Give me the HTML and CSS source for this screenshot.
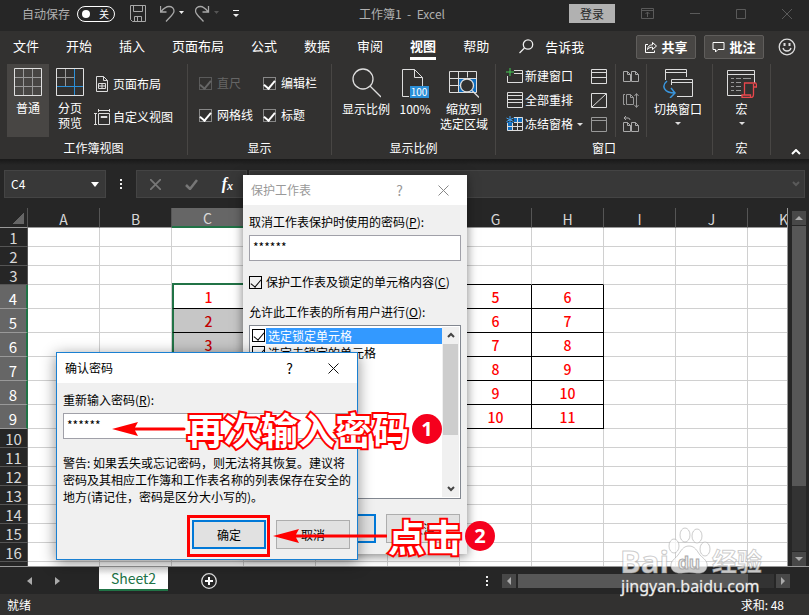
FILE: index.html
```html
<!DOCTYPE html>
<html lang="zh-CN">
<head>
  <meta charset="UTF-8" />
  <meta name="viewport" content="width=device-width, initial-scale=1.0"/>
  <title>工作簿1 - Excel</title>
  <link rel="stylesheet" href="styles.css">
</head>
<body>
  <div class="app">
    <header class="titlebar">
      <div class="quick">
        <label class="autosave" for="autosave">自动保存</label>
        <button class="switch" id="autosave"><span class="knob"></span>关</button>
        <button class="icon-btn save" aria-label="保存">
          <svg width="16" height="17" viewBox="0 0 16 17" fill="none" stroke="#a8a8a8"><path d="M.5.5h15v16H2.500l-2-2zM3.500.5v6h9v-6M4.500 16.500v-5h7v5M7.500 12v4"/></svg>
        </button>
        <button class="icon-btn undo" aria-label="撤消">
          <svg width="24" height="18" viewBox="0 0 24 18" fill="none" stroke="#a8a8a8"><path d="M.5 1v6h6M.8 6.800C4 3 6 1.500 9 1.500c3 0 5 2 5 4.500 0 3-3 5-8 10.500" stroke-width="1.300"/><path d="M19 6h5l-2.500 3z" fill="#eee" stroke="none"/></svg>
        </button>
        <button class="icon-btn redo" aria-label="恢复">
          <svg width="24" height="18" viewBox="0 0 24 18" fill="none" stroke="#a8a8a8"><path d="M13.500 1v6h-6M13.200 6.800C10 3 8 1.500 5.500 1.500c-3 0-5 2-5 4.500 0 3 3 5 8 10.500" stroke-width="1.300"/><path d="M19 6h5l-2.500 3z" fill="#555" stroke="none"/></svg>
        </button>
        <button class="icon-btn more" aria-label="自定义快速访问工具栏">
          <svg width="6" height="8" viewBox="0 0 6 8" fill="#eee"><path d="M0 0h6v1H0zM0 4h6L3 7z"/></svg>
        </button>
      </div>
      <div class="doc-title">工作簿1&nbsp; -&nbsp; Excel</div>
      <div class="window-tools">
        <button class="login">登录</button>
        <div class="window-buttons">
          <button class="icon-btn" aria-label="功能区显示选项"><svg width="13" height="11" viewBox="0 0 13 11" fill="none" stroke="#5a5a5a"><path d="M.5.5h12v10H.5zM.5 2.500h12M6.500 9V4M4.500 6l2-2 2 2"/></svg></button>
          <button class="icon-btn" aria-label="最小化"><svg width="10" height="11" viewBox="0 0 10 11" stroke="#5a5a5a"><path d="M0 5.500h10"/></svg></button>
          <button class="icon-btn" aria-label="最大化"><svg width="10" height="10" viewBox="0 0 10 10" fill="none" stroke="#5a5a5a"><path d="M.5.5h9v9h-9z"/></svg></button>
          <button class="icon-btn" aria-label="关闭"><svg width="10" height="10" viewBox="0 0 10 10" stroke="#5a5a5a"><path d="M0 0l10 10M10 0L0 10"/></svg></button>
        </div>
      </div>
    </header>

    <nav class="tabs">
      <a href="#">文件</a>
      <a href="#">开始</a>
      <a href="#">插入</a>
      <a href="#">页面布局</a>
      <a href="#">公式</a>
      <a href="#">数据</a>
      <a href="#">审阅</a>
      <a href="#" class="active">视图</a>
      <a href="#">帮助</a>
      <a href="#" class="tell-me"><svg width="15" height="15" viewBox="0 0 15 15" fill="none" stroke="#eee" stroke-width="1.300"><circle cx="9" cy="5.500" r="4.700"/><path d="M5.500 9L.5 14"/></svg>告诉我</a>
      <div class="tab-actions">
        <button class="action"><svg width="13" height="13" viewBox="0 0 13 13" fill="none" stroke="#fff"><path d="M4 4.500H1.500v8h9v-2M3.500 9.500C4 6 6 4.800 8.500 4.800V2.500l4 3.500-4 3.500V7.200C6.500 7.200 5 7.600 3.500 9.500z"/></svg>共享</button>
        <button class="action"><svg width="13" height="12" viewBox="0 0 13 12" fill="none" stroke="#fff"><path d="M1 1.500h11v7H6l-2.500 2.500V8.500H1z"/></svg>批注</button>
        <button class="icon-btn" aria-label="反馈"><svg width="18" height="18" viewBox="0 0 18 18" fill="none" stroke="#ddd" stroke-width="1.300"><circle cx="9" cy="9" r="7.800"/><path d="M5 10c1 4 7 4 8 0"/><path d="M6.500 5v3M11.500 5v3" stroke-width="2"/></svg></button>
      </div>
    </nav>

    <section class="ribbon">
      <div class="group group-views">
        <div class="tools">
          <button class="big selected">
            <svg width="28" height="28" viewBox="0 0 28 28" fill="none" stroke="#999"><path d="M9.500 1v26M18.500 1v26M1 9.500h26M1 18.500h26"/><path d="M.5.5h27v27H.5z" stroke="#e0e0e0"/></svg>
            普通
          </button>
          <button class="big">
            <svg width="28" height="28" viewBox="0 0 28 28" fill="none" stroke="#999"><path d="M9.500 1v17M1 9.500h17"/><path d="M.5.5h27v27H.5z" stroke="#e0e0e0"/><path d="M18.500 1v26M1 18.500h26" stroke="#2b8fd8"/></svg>
            分页<br>预览
          </button>
          <div class="stack stack-wide">
            <button class="small"><svg width="16" height="16" viewBox="0 0 16 16" fill="none" stroke="#ddd"><path d="M2.500.5h7l4 4v11h-11zM9.500.5v4h4M4.500 7.500h7v5h-7zM8 7.500v5M4.500 10h7"/></svg>页面布局</button>
            <button class="small"><svg width="16" height="16" viewBox="0 0 16 16" fill="none" stroke="#ddd"><path d="M4.500 4.500h11v11h-11zM4.500 0v3M15.500 0v3M4.500 1.500h11M0 4.500h3M0 15.500h3M1.500 4.500v11M7 7.500h6v1H7z"/></svg>自定义视图</button>
          </div>
        </div>
        <div class="group-name">工作簿视图</div>
      </div>

      <div class="group group-show">
        <div class="tools checks">
          <label class="disabled"><input type="checkbox" checked disabled>直尺</label>
          <label><input type="checkbox" checked>编辑栏</label>
          <label><input type="checkbox" checked>网格线</label>
          <label><input type="checkbox" checked>标题</label>
        </div>
        <div class="group-name">显示</div>
      </div>

      <div class="group group-zoom">
        <div class="tools">
          <button class="big">
            <svg width="30" height="30" viewBox="0 0 30 30" fill="none" stroke="#ddd" stroke-width="1.300"><circle cx="12" cy="11" r="10"/><path d="M19 18l11 11"/></svg>
            显示比例
          </button>
          <button class="big">
            <svg width="28" height="30" viewBox="0 0 28 30" fill="none" stroke="#ddd"><path d="M8 28.500H1.500V1.500h12l8 8V18M13.500 1.500v8h8"/><path d="M9 18h19v12H9z" fill="#2b8fd8" stroke="none"/><text x="18" y="28" text-anchor="middle" font-size="10" fill="#fff" stroke="none">100</text></svg>
            100%
          </button>
          <button class="big">
            <svg width="30" height="30" viewBox="0 0 30 30" fill="none" stroke="#ddd"><path d="M10 11h18v13H10z" fill="#0f6cbd" stroke="none"/><path d="M.5 3.500h27v21H.5zM9.500 3.500v21M18.500 3.500v6M.5 10.500h27M.5 17.500h10"/><circle cx="18" cy="17.500" r="6.500" fill="#323130" stroke-width="1.300"/><path d="M23 22.500l7 7" stroke-width="1.300"/></svg>
            缩放到<br>选定区域
          </button>
        </div>
        <div class="group-name">显示比例</div>
      </div>

      <div class="group group-window">
        <div class="tools">
          <div class="stack">
            <button class="small"><svg width="17" height="16" viewBox="0 0 17 16" fill="none" stroke="#ddd"><path d="M8 2.500h8.500v12H1.500V8M8 5.500h8.500"/><path d="M4 0v8M0 4h8" stroke="#4c5"/></svg>新建窗口</button>
            <button class="small"><svg width="17" height="16" viewBox="0 0 17 16" fill="none" stroke="#ddd"><path d="M1.500.5h15v15h-15zM1.500 3.500h15M1.500 7.500h15M1.500 10.500h15"/></svg>全部重排</button>
            <button class="small"><svg width="17" height="16" viewBox="0 0 17 16" fill="none" stroke="#ddd"><path d="M8 1h9v5H8zM1 6h6v9H1z" fill="#0f6cbd" stroke="none"/><path d="M8 1.500h8.500v13h-15V7M6.500 7v8M11.500 1v14M1.500 10.500h15M8 6.500h8"/><path d="M4 0v7M.5 2l7 3.500M7.500 2l-7 3.500" stroke="#42a5f5"/></svg>冻结窗格<span class="arrow"></span></button>
          </div>
          <div class="stack icons">
            <button class="icon-btn" aria-label="拆分"><svg width="16" height="15" viewBox="0 0 16 15" fill="none" stroke="#ddd"><path d="M.5.5h15v14H.5zM.5 3.500h15M.5 8.500h15"/></svg></button>
            <button class="icon-btn" aria-label="隐藏"><svg width="16" height="15" viewBox="0 0 16 15" fill="none" stroke="#ddd"><path d="M.5.5h15v14H.5zM1 14L15 1"/></svg></button>
            <button class="icon-btn" aria-label="取消隐藏"><svg width="16" height="15" viewBox="0 0 16 15" fill="none" stroke="#999"><path d="M.5.5h15v14H.5zM.5 3.500h15"/></svg></button>
          </div>
          <div class="stack icons split">
            <button class="icon-btn" aria-label="并排查看"><svg width="16" height="15" viewBox="0 0 16 15" fill="none" stroke="#aaa"><path d="M.5 2.500h4l3 3v7h-7zM4.500 2.500v3h3M8.500 2.500h4l3 3v7h-7zM12.500 2.500v3h3"/></svg></button>
            <button class="icon-btn" aria-label="同步滚动"><svg width="16" height="15" viewBox="0 0 16 15" fill="none" stroke="#999"><path d="M2 1.500H.5v10H2M3.500 1.500h4l3 3v7h-7zM7.500 1.500v3h3M13.500 1v13M11.500 3l2-2.500 2 2.500M11.500 12l2 2.500 2-2.500"/></svg></button>
            <button class="icon-btn" aria-label="重设窗口位置"><svg width="16" height="16" viewBox="0 0 16 16" fill="none" stroke="#aaa"><path d="M.5 6.500h4l3 3v6h-7zM4.500 6.500v3h3M8.500 6.500h4l3 3v6h-7zM12.500 6.500v3h3M3 0L1 2l2 2M1 2h4q2 0 2 2"/></svg></button>
          </div>
          <button class="big switch-window">
            <svg width="30" height="30" viewBox="0 0 30 30" fill="none" stroke="#ddd"><path d="M2.500 12V1.500h21V9M2.500 4.500h21"/><path d="M8.500 17v-5.500h21v17H14M8.500 14.500h21"/><path d="M4 13c-6 5-3 12 8 12M8 20l4 5-5 5" stroke="#3a96dd" stroke-width="1.500"/></svg>
            切换窗口
            <span class="arrow"></span>
          </button>
        </div>
        <div class="group-name">窗口</div>
      </div>

      <div class="group group-macro">
        <div class="tools">
          <button class="big">
            <svg width="30" height="30" viewBox="0 0 30 30" fill="none" stroke="#ddd"><path d="M15 27.500H.5v-25h27V15M.5 6.500h27"/><path d="M4 10.500h3m2 0h5m2 0h8M4 14.500h3m2 0h5M4 18.500h3m2 0h5M4 22.500h3m2 0h5" stroke="#999"/><path d="M17.500 27v-12h11q1 0 1 4h-3M26.500 16v10q0 3.500-2.500 3.500h-9V27h8.500v2.500" stroke="#e8474c" stroke-width="1.300"/></svg>
            宏
            <span class="arrow"></span>
          </button>
        </div>
        <div class="group-name">宏</div>
      </div>
      <button class="icon-btn collapse" aria-label="折叠功能区"><svg width="10" height="6" viewBox="0 0 10 6" fill="none" stroke="#fff" stroke-width="2"><path d="M1 5l4-4 4 4"/></svg></button>
    </section>

    <div class="formula-bar">
      <div class="name-box">
        <input type="text" value="C4" aria-label="名称框">
        <button class="icon-btn" aria-label="名称列表"><svg width="8" height="5" viewBox="0 0 8 5" fill="#fff"><path d="M0 0h8L4 5z"/></svg></button>
      </div>
      <span class="dots"></span>
      <div class="fx-box">
        <button class="icon-btn" aria-label="取消"><svg width="11" height="11" viewBox="0 0 11 11" stroke="#777" stroke-width="1.800"><path d="M0 0l11 11M11 0L0 11"/></svg></button>
        <button class="icon-btn" aria-label="输入"><svg width="13" height="11" viewBox="0 0 13 11" fill="none" stroke="#777" stroke-width="2.500"><path d="M1 6l4 4 7-9"/></svg></button>
        <button class="icon-btn fx" aria-label="插入函数"><i>f</i><i class="sub">x</i></button>
      </div>
      <div class="formula-input">
        <input type="text" aria-label="编辑栏">
        <svg width="8" height="6" viewBox="0 0 8 6" fill="none" stroke="#5a5a5a" stroke-width="2"><path d="M1 1l3 3 3-3"/></svg>
      </div>
    </div>

    <main class="workspace">
      <div class="sheet">
        <table class="grid" id="grid"></table>
      </div>
      <div class="scroll-v">
        <span class="scroll-btn"><svg width="8" height="4" viewBox="0 0 8 4" fill="#aaa"><path d="M0 4l4-4 4 4z"/></svg></span>
        <span class="scroll-track"><span class="scroll-thumb"></span></span>
        <span class="scroll-btn"><svg width="8" height="4" viewBox="0 0 8 4" fill="#aaa"><path d="M0 0h8L4 4z"/></svg></span>
      </div>
    </main>

    <div class="sheet-tabs">
      <div class="sheet-nav">
        <button class="icon-btn" aria-label="上一个"><svg width="5" height="8" viewBox="0 0 5 8" fill="#aaa"><path d="M5 0v8L0 4z"/></svg></button>
        <button class="icon-btn" aria-label="下一个"><svg width="5" height="8" viewBox="0 0 5 8" fill="#aaa"><path d="M0 0v8l5-4z"/></svg></button>
      </div>
      <a href="#" class="sheet-tab">Sheet2</a>
      <button class="icon-btn add-sheet" aria-label="新工作表"><svg width="16" height="16" viewBox="0 0 16 16" fill="none" stroke="#ddd"><circle cx="8" cy="8" r="7.300" stroke-width="1.300"/><path d="M8 4v8M4 8h8" stroke="#fff" stroke-width="2"/></svg></button>
      <span class="dots"></span>
      <div class="scroll-h">
        <span class="scroll-btn"><svg width="4" height="8" viewBox="0 0 4 8" fill="#aaa"><path d="M4 0v8L0 4z"/></svg></span>
        <span class="scroll-track"><span class="scroll-thumb"></span></span>
        <span class="scroll-btn"><svg width="4" height="8" viewBox="0 0 4 8" fill="#aaa"><path d="M0 0v8l4-4z"/></svg></span>
      </div>
    </div>

    <footer class="status">
      <span>就绪</span>
      <span>求和: 48</span>
    </footer>
  </div>

  <div class="dialog protect">
    <div class="dialog-title">
      <span>保护工作表</span>
      <button class="icon-btn help" aria-label="帮助">?</button>
      <button class="icon-btn" aria-label="关闭"><svg width="11" height="11" viewBox="0 0 11 11" stroke="#888"><path d="M.5.5l10 10M10.500.5l-10 10"/></svg></button>
    </div>
    <div class="dialog-body">
      <label for="unprotect">取消工作表保护时使用的密码(<u>P</u>):</label>
      <input type="text" class="field" id="unprotect" value="******">
      <label class="check-row"><input type="checkbox" checked><span>保护工作表及锁定的单元格内容(<u>C</u>)</span></label>
      <div class="list-label">允许此工作表的所有用户进行(<u>O</u>):</div>
      <div class="list">
        <div class="list-items">
          <label class="current"><input type="checkbox" checked><span>选定锁定单元格</span></label>
          <label><input type="checkbox" checked><span>选定未锁定的单元格</span></label>
        </div>
        <div class="list-scroll">
          <svg width="8" height="7" viewBox="0 0 8 7" fill="none" stroke="#444" stroke-width="2"><path d="M1 5l3-3 3 3"/></svg>
          <span class="list-thumb"></span>
          <svg width="8" height="7" viewBox="0 0 8 7" fill="none" stroke="#444" stroke-width="2"><path d="M1 2l3 3 3-3"/></svg>
        </div>
      </div>
      <div class="buttons">
        <button class="btn primary" aria-label="确定"></button>
        <button class="btn">取消</button>
      </div>
    </div>
  </div>

  <div class="dialog confirm">
    <div class="dialog-title">
      <span>确认密码</span>
      <button class="icon-btn help" aria-label="帮助">?</button>
      <button class="icon-btn" aria-label="关闭"><svg width="11" height="11" viewBox="0 0 11 11" stroke="#111"><path d="M.5.5l10 10M10.500.5l-10 10"/></svg></button>
    </div>
    <div class="dialog-body">
      <label for="again">重新输入密码(<u>R</u>):</label>
      <input type="text" class="field" id="again" value="******">
      <p>警告: 如果丢失或忘记密码，则无法将其恢复。建议将<br>密码及其相应工作簿和工作表名称的列表保存在安全的<br>地方(请记住，密码是区分大小写的)。</p>
      <div class="buttons">
        <button class="btn primary">确定</button>
        <button class="btn">取消</button>
      </div>
    </div>
  </div>

  <!-- step marks -->
  <div class="mark-box"></div>
  <div class="step step-1">
    <svg width="74" height="16" viewBox="0 0 74 16" fill="#f00"><path d="M0 8L26 1l-3 5.500h49a1.500 1.500 0 0 1 0 3H23L26 15z"/></svg>
    <span class="step-text">再次输入密码</span>
    <span class="step-num">1</span>
  </div>
  <div class="step step-2">
    <svg width="114" height="16" viewBox="0 0 114 16" fill="#f00"><path d="M0 8L26 1l-3 5.500h90a1.500 1.500 0 0 1 0 3H23L26 15z"/></svg>
    <span class="step-text">点击</span>
    <span class="step-num">2</span>
  </div>

  <svg class="watermark" width="146" height="72" viewBox="0 0 146 72">
    <g stroke="#999" stroke-opacity=".5" fill="#fff" fill-opacity=".75">
      <text x="0" y="46" class="wm-latin">Bai</text>
      <ellipse cx="54" cy="19" rx="5" ry="7"/>
      <ellipse cx="65" cy="8" rx="5" ry="7"/>
      <ellipse cx="77" cy="9" rx="5" ry="7"/>
      <ellipse cx="85" cy="22" rx="5" ry="7"/>
      <path d="M69 19c6 0 8 5 11 9 4 4 8 6 7 12-1 6-7 7-12 6q-6-1-12 0c-6 1-11-1-12-6-1-6 4-8 7-12s5-9 11-9z"/>
      <text x="92" y="44" class="wm-cjk">经验</text>
    </g>
    <text x="58" y="42" class="wm-du">du</text>
    <text x="1" y="65" class="wm-url">jingyan.baidu.com</text>
  </svg>

  <script>
    const columns = ["A", "B", "C", "D", "E", "F", "G", "H", "I", "J", "K"];
    const values = {
      C4: 1, C5: 2, C6: 3,
      G4: 5, G5: 6, G6: 7, G7: 8, G8: 9, G9: 10,
      H4: 6, H5: 7, H6: 8, H7: 9, H8: 10, H9: 11
    };

    let html = "<thead><tr><th class='corner'></th>";
    columns.forEach((c) => {
      html += `<th class="${c === "C" ? "picked" : ""}">${c}</th>`;
    });
    html += "</tr></thead><tbody>";

    for (let r = 1; r <= 17; r++) {
      const inRange = r >= 4 && r <= 9;
      html += `<tr class="${inRange ? "tall" : ""}"><th>${r < 17 ? r : ""}</th>`;
      columns.forEach((c) => {
        const list = [];
        if (inRange && c >= "C" && c <= "H") list.push("boxed");
        if (r === 3 && c >= "D" && c <= "H") list.push("above");
        if (r === 3 && c === "C") list.push("above-picked");
        if (inRange && c === "C") list.push(r === 4 ? "range first" : "range");
        html += `<td class="${list.join(" ")}">${values[c + r] || ""}</td>`;
      });
      html += "</tr>";
    }
    document.getElementById("grid").innerHTML = html + "</tbody>";
  </script>
</body>
</html>
```
FILE: styles.css
```css
* {
  box-sizing: border-box;
}
body {
  margin: 0;
  font-family: "Noto Sans CJK SC", "Noto Sans", sans-serif;
  font-size: 12px;
  line-height: 16px;
  background: #262626;
  color: #fff;
  overflow: hidden;
}
button, input {
  font: inherit;
  color: inherit;
  margin: 0;
}
button {
  padding: 0;
  border: none;
  background: none;
  white-space: nowrap;
}
svg {
  display: block;
  flex: none;
}
a {
  color: inherit;
  text-decoration: none;
}
.icon-btn {
  display: flex;
  align-items: center;
  justify-content: center;
}
.app {
  height: 100vh;
  display: flex;
  flex-direction: column;
}

/* title bar */
.titlebar {
  display: grid;
  grid-template-columns: 1fr auto 1fr;
  align-items: center;
  height: 31px;
  padding: 0 17px 4px 22px;
  color: #b0b0b0;
}
.doc-title {
  padding-right: 10px;
}
.quick {
  display: flex;
  align-items: center;
}
.switch {
  display: flex;
  align-items: center;
  justify-content: space-between;
  width: 38px;
  height: 16px;
  margin-left: 7px;
  padding: 0 5px 0 4px;
  border: 1px solid #fff;
  border-radius: 8px;
  color: #fff;
  font-size: 10px;
  line-height: 14px;
}
.knob {
  width: 8px;
  height: 8px;
  border-radius: 50%;
  background: #fff;
}
.save {
  margin-left: 15px;
}
.undo {
  margin-left: 14px;
}
.redo {
  margin-left: 11px;
}
.more {
  margin-left: 14px;
}
.window-tools {
  display: flex;
  justify-content: flex-end;
  align-items: center;
  gap: 26px;
}
.login {
  width: 46px;
  height: 19px;
  background: #b1b1b1;
  color: #262626;
}
.window-buttons {
  display: flex;
  gap: 36px;
}

/* ribbon tabs */
.tabs {
  display: flex;
  align-items: center;
  gap: 27px;
  height: 31px;
  padding: 0 13px;
  background: #323130;
  font-size: 13px;
}
.tabs a {
  height: 26px;
  line-height: 24px;
  white-space: nowrap;
}
.tabs .active {
  font-weight: bold;
  border-bottom: 3px solid #fff;
}
.tabs .tell-me {
  display: flex;
  align-items: center;
  gap: 11px;
  margin-left: 3px;
}
.tab-actions {
  display: flex;
  align-items: center;
  gap: 8px;
  margin-left: auto;
}
.tab-actions .icon-btn {
  margin-left: 6px;
}
.action {
  display: flex;
  align-items: center;
  justify-content: center;
  gap: 4px;
  width: 60px;
  height: 24px;
  border: 1px solid #605e5c;
  border-radius: 2px;
  background: #484644;
  font-weight: bold;
}

/* ribbon */
.ribbon {
  display: flex;
  height: 98px;
  padding: 2px 8px 4px 0;
  background: #323130;
  border-bottom: 1px solid #1a1a1a;
}
.group {
  display: flex;
  flex-direction: column;
  justify-content: space-between;
  border-right: 1px solid #484644;
}
.group-name {
  text-align: center;
  line-height: 14px;
}
.tools {
  display: flex;
}
.group-views {
  width: 188px;
}
.group-views .tools {
  padding-left: 7px;
}
.group-show {
  width: 144px;
}
.group-zoom {
  width: 164px;
}
.group-zoom .tools {
  padding-left: 6px;
}
.group-window {
  width: 217px;
}
.group-window .tools {
  padding-left: 10px;
}
.group-macro {
  width: 58px;
}
.group-macro .tools {
  justify-content: center;
}
.big {
  display: flex;
  flex-direction: column;
  align-items: center;
  height: 73px;
  min-width: 42px;
  padding: 4px 4px 0;
  line-height: 15px;
}
.big svg {
  margin-bottom: 4px;
}
.big .arrow {
  margin: 6px 0 0;
}
.group-zoom .big svg,
.group-window .big svg,
.group-macro .big svg {
  margin-bottom: 3px;
}
.switch-window {
  margin-left: 3px;
}
.selected {
  background: #484644;
}
.arrow {
  display: inline-block;
  margin-left: 2px;
  border: 3px solid transparent;
  border-top-color: #ddd;
  border-bottom: none;
}
.small {
  display: flex;
  align-items: center;
  gap: 2px;
  height: 24px;
}
.stack {
  display: flex;
  flex-direction: column;
}
.stack-wide {
  justify-content: space-around;
  padding: 4px 0 4px 3px;
}
.stack-wide .small {
  gap: 3px;
}
.icons {
  padding: 0 7px;
}
.icons .icon-btn {
  height: 24px;
}
.stack + .icons {
  margin-left: 1px;
}
.split {
  border-left: 1px solid #484644;
  border-right: 1px solid #484644;
}
.checks {
  display: grid;
  grid-template-columns: 64px auto;
  grid-auto-rows: 32px;
  padding: 3px 0 0 11px;
}
.checks label {
  display: flex;
  align-items: center;
  gap: 5px;
}
.disabled {
  color: #666;
}
input[type="checkbox"] {
  appearance: none;
  flex: none;
  display: flex;
  justify-content: center;
  width: 13px;
  height: 13px;
  border: 1px solid currentColor;
}
input[type="checkbox"]:checked::after {
  content: "";
  width: 5px;
  height: 9px;
  border: solid currentColor;
  border-width: 0 1px 1px 0;
  transform: rotate(40deg);
}
.checks input[type="checkbox"] {
  border-color: #888;
}
.checks input[type="checkbox"]:disabled {
  border-color: #5a5a5a;
}
.checks input[type="checkbox"]:checked::after {
  border-width: 0 2px 2px 0;
}
.collapse {
  align-self: flex-end;
  margin-left: auto;
}

/* formula bar */
.formula-bar {
  display: flex;
  align-items: center;
  height: 48px;
  padding: 10px 4px;
  background: linear-gradient(#1a1a1a, #262626 5px);
}
.name-box, .fx-box, .formula-input {
  display: flex;
  align-items: center;
  height: 28px;
  background: #383838;
  border: 1px solid #444;
}
.name-box {
  width: 102px;
  padding: 0 6px;
}
.name-box input, .formula-input input {
  flex: 1;
  min-width: 0;
  padding: 0;
  border: none;
  background: none;
}
.dots {
  width: 2px;
  height: 10px;
  margin: 0 14px;
  background: repeating-linear-gradient(#eee 0 2px, transparent 2px 4px);
}
.fx-box {
  width: 111px;
  justify-content: space-between;
  padding: 0 13px;
}
.fx {
  font-family: "Liberation Serif", serif;
  font-size: 16px;
  font-weight: bold;
}
.fx .sub {
  font-size: 12px;
  padding-top: 3px;
}
.formula-input {
  flex: 1;
  margin-left: 2px;
  padding: 0 4px;
}

/* cells */
.workspace {
  flex: 1;
  min-height: 0;
  display: flex;
  gap: 4px;
  padding-right: 3px;
}
.sheet {
  flex: 1;
  min-width: 0;
  overflow: hidden;
  background: #fff;
  border-right: 1px solid #999;
}
.grid {
  width: 820px;
  table-layout: fixed;
  border-collapse: separate;
  border-spacing: 0;
  font-size: 15px;
  line-height: 16px;
}
.grid th, .grid td {
  width: 72px;
  height: 19px;
  padding: 0;
  text-align: center;
  font-weight: normal;
  border-right: 1px solid #d0d0d0;
  border-bottom: 1px solid #d0d0d0;
}
.grid th {
  padding-top: 2px;
  color: #d8d8d8;
  background: #262626;
  border-color: #555;
}
.grid thead th {
  border-bottom-color: #999;
  font-size: 14px;
}
.grid tr th:first-child {
  width: 28px;
}
.grid .corner {
  background: linear-gradient(135deg, transparent 50%, #666 50%) 13px 5px / 11px 11px no-repeat #262626;
}
.grid .picked {
  background: #666;
  border-bottom: 2px solid #217346;
}
.grid .tall th, .grid .tall td {
  height: 24px;
}
.grid .tall th {
  padding-top: 4px;
  background: #666;
  color: #fff;
  border-bottom-color: #999;
  border-right: 2px solid #217346;
}
.grid .boxed {
  color: #f00;
  font-size: 14px;
  font-weight: 500;
  border-color: #000;
}
.grid .above {
  border-bottom-color: #000;
}
.grid .above-picked {
  border-bottom: 2px solid #217346;
}
.grid .range {
  background: #c6c6c6;
  color: #c00000;
  border-left: 2px solid #217346;
}
.grid .first {
  background: #fff;
  color: #f00;
}

/* scroll bars */
.scroll-btn {
  display: flex;
  align-items: center;
  justify-content: center;
  width: 14px;
  height: 14px;
  background: #484848;
}
.scroll-track {
  flex: 1;
  display: flex;
  background: #333;
}
.scroll-thumb {
  background: #575757;
}
.scroll-v {
  display: flex;
  flex-direction: column;
  gap: 1px;
  width: 14px;
  padding-top: 3px;
}
.scroll-v .scroll-thumb {
  width: 14px;
  height: 80%;
}
.scroll-h {
  display: flex;
  gap: 2px;
  width: 288px;
}
.scroll-h .scroll-thumb {
  width: 90%;
}

/* sheet tabs and status */
.sheet-tabs {
  display: flex;
  align-items: center;
  height: 28px;
  padding-right: 19px;
  border-top: 1px solid #999;
}
.sheet-nav {
  display: flex;
  gap: 23px;
  width: 99px;
  padding-left: 27px;
}
.sheet-tab {
  align-self: flex-start;
  width: 69px;
  height: 24px;
  text-align: center;
  font-size: 14px;
  line-height: 22px;
  color: #217346;
  background: linear-gradient(#ddd, #fff 8px);
  border-bottom: 2px solid #217346;
}
.add-sheet {
  margin-left: 33px;
}
.sheet-tabs .dots {
  margin-left: auto;
}
.status {
  display: flex;
  justify-content: space-between;
  align-items: center;
  height: 21px;
  padding: 0 25px 0 7px;
  background: #323130;
}

/* dialogs */
.dialog {
  position: absolute;
  color: #000;
  background: #f0f0f0;
}
.dialog-title {
  display: flex;
  align-items: center;
  height: 30px;
  padding: 0 18px 0 8px;
  background: #fff;
}
.help {
  margin: 0 35px 0 auto;
  font-size: 14px;
}
.dialog-body {
  display: flex;
  flex-direction: column;
  padding: 9px 6px;
}
.field {
  height: 26px;
  margin-top: 5px;
  padding: 0 3px 3px;
  border: 1px solid #a0a0a8;
  background: #fff;
}
.buttons {
  display: flex;
  justify-content: flex-end;
  gap: 10px;
  padding-right: 1px;
}
.btn {
  width: 74px;
  height: 29px;
  background: #e1e1e1;
  border: 1px solid #adadad;
}
.primary {
  border: 2px solid #0078d7;
}
.protect {
  left: 243px;
  top: 175px;
  width: 224px;
  height: 379px;
  box-shadow: 0 2px 10px rgba(0,0,0,0.5);
}
.protect .dialog-title {
  color: #999;
}
.check-row {
  display: flex;
  align-items: center;
  gap: 4px;
  margin: 13px 0 14px;
  white-space: nowrap;
}
.list {
  display: flex;
  height: 174px;
  margin: 5px 0 15px;
  border: 1px solid #828790;
  background: #fff;
  padding: 1px;
}
.list-items {
  flex: 1;
}
.list-items label {
  display: flex;
  align-items: center;
  gap: 1px;
  height: 17px;
  padding-left: 1px;
}
.list-items span {
  flex: 1;
  padding-left: 2px;
}
.current span {
  background: #3399ff;
  color: #fff;
}
.list-scroll {
  display: flex;
  flex-direction: column;
  align-items: center;
  width: 17px;
  padding: 5px 0;
  background: #f0f0f0;
}
.list-thumb {
  width: 15px;
  height: 91px;
  margin: 5px 0 auto;
  background: #cdcdcd;
}
.confirm {
  left: 56px;
  top: 352px;
  width: 302px;
  height: 208px;
  border: 1px solid #1a80d2;
  box-shadow: 0 3px 14px rgba(0,0,0,0.45);
}
.confirm p {
  margin: 15px 0;
  line-height: 17px;
  white-space: nowrap;
}

/* step marks */
.mark-box {
  position: absolute;
  left: 187px;
  top: 515px;
  width: 83px;
  height: 42px;
  border: 3px solid #f00;
}
.step {
  position: absolute;
  display: flex;
  align-items: center;
  gap: 1px;
}
.step-1 {
  left: 112px;
  top: 406px;
}
.step-2 {
  left: 273px;
  top: 513px;
}
.step-text {
  font-size: 37px;
  line-height: 46px;
  font-weight: bold;
  color: #fff;
  -webkit-text-stroke: 4px #f00;
  paint-order: stroke fill;
}
.step-num {
  width: 30px;
  height: 30px;
  margin-left: 2px;
  border-radius: 50%;
  background: #f5001d;
  text-align: center;
  font: bold 20px/30px "Noto Sans", sans-serif;
}

.watermark {
  position: absolute;
  left: 620px;
  top: 527px;
}
.wm-latin {
  font: bold 31px "Open Sans", sans-serif;
}
.wm-cjk {
  font: bold 25px "Noto Sans CJK SC", sans-serif;
}
.wm-du {
  font: bold 18px "Liberation Sans", sans-serif;
  fill: #eee;
  stroke: #aaa;
}
.wm-url {
  font: 16px "Noto Sans", sans-serif;
  fill: #eee;
  stroke: #777;
  stroke-width: 1px;
  paint-order: stroke fill;
}
```
